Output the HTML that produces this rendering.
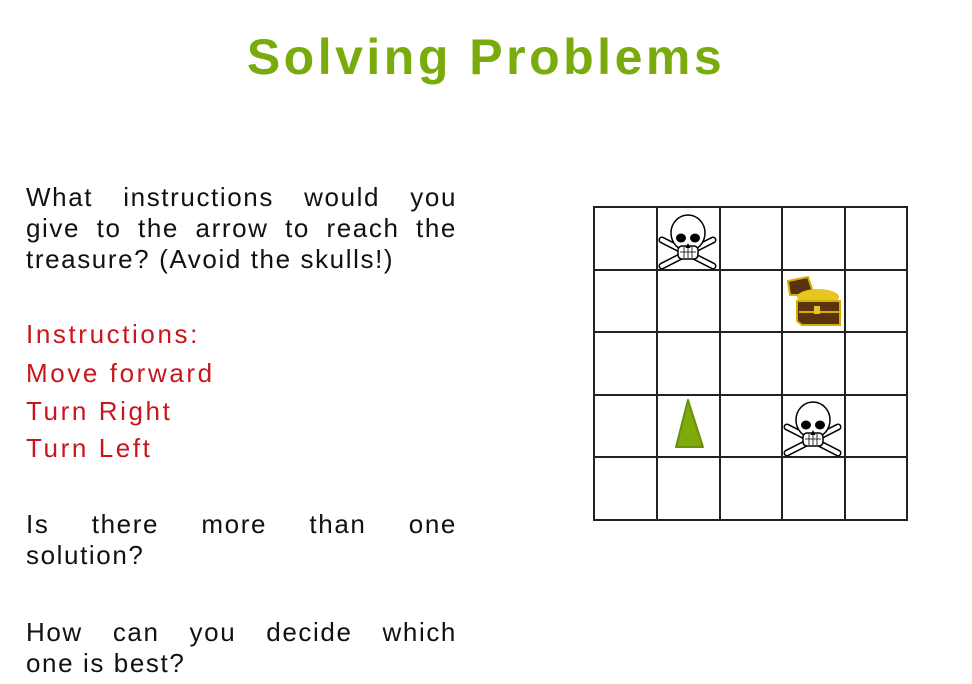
<!DOCTYPE html>
<html><head><style>
body{margin:0;width:972px;height:684px;background:#fff;position:relative;overflow:hidden;font-family:"Liberation Sans",sans-serif}
.t{position:absolute;left:0;width:972px;text-align:center;top:28px;font-size:50px;font-weight:bold;color:#7aab0c;letter-spacing:3.5px}
.l{position:absolute;left:26px;width:431px;font-size:26px;line-height:31px;white-space:nowrap;color:#111;letter-spacing:1.6px}
.j{text-align:justify;text-align-last:justify}
.r{color:#c8161d;letter-spacing:2.6px}
</style></head><body>
<div class="t">Solving Problems</div>
<div class="l j" style="top:182px">What instructions would you</div>
<div class="l j" style="top:213px">give to the arrow to reach the</div>
<div class="l" style="top:244px">treasure? (Avoid the skulls!)</div>
<div class="l r" style="top:319px">Instructions:</div>
<div class="l r" style="top:358px">Move forward</div>
<div class="l r" style="top:396px">Turn Right</div>
<div class="l r" style="top:433px">Turn Left</div>
<div class="l j" style="top:509px">Is there more than one</div>
<div class="l" style="top:540px">solution?</div>
<div class="l j" style="top:617px">How can you decide which</div>
<div class="l" style="top:648px">one is best?</div>
<svg style="position:absolute;left:0;top:0" width="972" height="684">
<g stroke="#222" stroke-width="2" fill="none">
<rect x="594" y="207" width="313" height="313"/>
<path d="M657 207V520M720 207V520M782 207V520M845 207V520M594 270H907M594 332H907M594 395H907M594 457H907"/>
</g>
<polygon points="688,400 676,447 703,447" fill="#7fab0a" stroke="#6a900a" stroke-width="2" stroke-linejoin="round"/>
<g id="sk">
<path d="M662 240L713 266M713 240L662 266" stroke="#000" stroke-width="7" stroke-linecap="round"/>
<path d="M662 240L713 266M713 240L662 266" stroke="#fff" stroke-width="4" stroke-linecap="round"/>
<g stroke="#000" stroke-width="1.5" fill="#fff">
<ellipse cx="688" cy="233" rx="17" ry="18"/>
<rect x="678" y="246" width="20" height="13" rx="4"/>
</g>
<path d="M680 252h16M684 247v11M688 247v11M692 247v11" stroke="#000" stroke-width="0.8"/>
<ellipse cx="681" cy="238" rx="5" ry="4.5" fill="#000"/>
<ellipse cx="695" cy="238" rx="5" ry="4.5" fill="#000"/>
<path d="M688 243l-2.5 5h5z" fill="#000"/>
</g>
<use href="#sk" x="125" y="187"/>
<g>
<path d="M788 281l20-4 6 18h-24z" fill="#5a3210" stroke="#d4b000" stroke-width="2"/>
<ellipse cx="818" cy="297" rx="21" ry="8" fill="#e8c620"/>
<path d="M797 301h43v24h-38l-5-4z" fill="#5b3310" stroke="#d4b000" stroke-width="2"/>
<path d="M799 312h40" stroke="#d4b000" stroke-width="2"/>
<rect x="814" y="306" width="6" height="8" fill="#e8c620"/>
</g>
</svg>
</body></html>
